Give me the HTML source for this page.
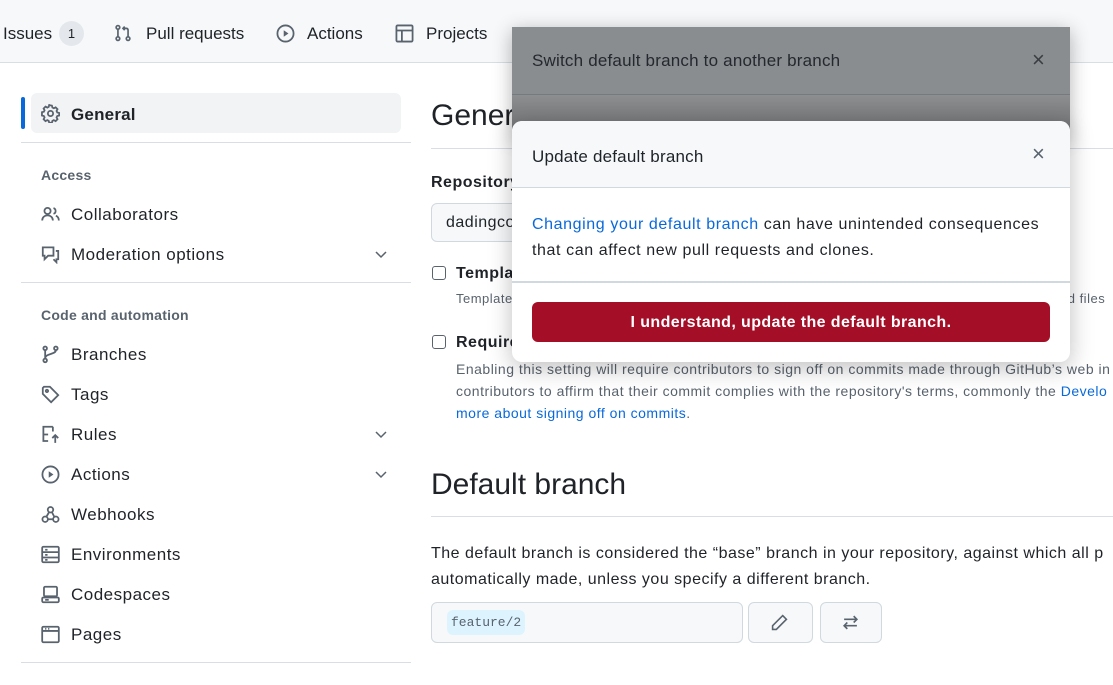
<!DOCTYPE html>
<html><head><meta charset="utf-8"><style>
*{box-sizing:border-box;margin:0;padding:0}
body{width:1113px;height:685px;overflow:hidden;background:#fff;font-family:"Liberation Sans",sans-serif;color:#1f2328;position:relative;letter-spacing:0.5px}
.nav{position:absolute;left:0;top:0;width:1113px;height:63px;background:#f6f8fa;border-bottom:1px solid #d8dee4;letter-spacing:0}
.nav span{position:absolute;top:24px;font-size:17px;color:#1f2328}
.ab{position:absolute}
svg{fill:none;stroke:#59636e;stroke-width:1.5}
.it{position:absolute;left:71px;font-size:17px;margin-top:1px}
.ic{position:absolute;left:41px}
.hr{position:absolute;left:21px;width:390px;height:1px;background:#d8dee4}
.sh{position:absolute;left:41px;font-size:14px;color:#59636e;font-weight:bold;letter-spacing:0.25px;margin-top:1px}
.chev{position:absolute;left:373px}
</style></head><body>
<div class="nav">
<span style="left:3px">Issues</span>
<div class="ab" style="left:59px;top:21px;width:25px;height:25px;border-radius:13px;background:#e4e8ec;font-size:13px;text-align:center;line-height:25px">1</div>
<svg class="ab" style="left:114px;top:24px" width="18" height="18" viewBox="0 0 16 16"><circle cx="3.5" cy="3" r="1.6"/><circle cx="3.5" cy="13" r="1.6"/><circle cx="12.5" cy="13" r="1.6"/><path d="M3.5 4.6v6.8M12.5 11.4V5.5c0-1-.6-1.6-1.6-1.6H8M9.5 2.3 8 3.9l1.5 1.6"/></svg>
<span style="left:146px">Pull requests</span>
<svg class="ab" style="left:276px;top:24px" width="19" height="19" viewBox="0 0 16 16"><circle cx="8" cy="8" r="6.8"/><path d="M6.5 5.3v5.4L10.5 8z" fill="#59636e" stroke="none"/></svg>
<span style="left:307px">Actions</span>
<svg class="ab" style="left:395px;top:24px" width="19" height="19" viewBox="0 0 16 16"><rect x="1.2" y="1.2" width="13.6" height="13.6" rx="1"/><path d="M1.2 5.5h13.6M5.8 5.5v9.3"/></svg>
<span style="left:426px">Projects</span>
</div>

<div class="ab" style="left:21px;top:97px;width:4px;height:32px;border-radius:2px;background:#0969da"></div>
<div class="ab" style="left:31px;top:93px;width:370px;height:40px;border-radius:6px;background:#f2f3f5"></div>
<svg class="ic" style="top:104px" width="19" height="19" viewBox="0 0 16 16"><circle cx="8" cy="8" r="2.2"/><path d="M8 1.2l1.2.2.4 1.6 1.2.6 1.5-.8 1.6 1.6-.8 1.5.6 1.2 1.6.4v2.2l-1.6.4-.6 1.2.8 1.5-1.6 1.6-1.5-.8-1.2.6-.4 1.6H6.9l-.4-1.6-1.2-.6-1.5.8-1.6-1.6.8-1.5-.6-1.2-1.6-.4V6.9l1.6-.4.6-1.2-.8-1.5 1.6-1.6 1.5.8 1.2-.6.4-1.6z"/></svg>
<div class="it" style="top:104px;font-weight:bold;letter-spacing:0.2px">General</div>
<div class="hr" style="top:142px"></div>
<div class="sh" style="top:166px">Access</div>
<svg class="ic" style="top:205px" width="19" height="19" viewBox="0 0 16 16"><circle cx="5.5" cy="5" r="2.6"/><path d="M1 13c0-2.5 2-4.3 4.5-4.3S10 10.5 10 13M10.5 2.6a2.5 2.5 0 010 4.8M12.5 9c1.5.6 2.5 2 2.5 4"/></svg>
<div class="it" style="top:204px">Collaborators</div>
<svg class="ic" style="top:245px" width="19" height="19" viewBox="0 0 16 16"><path d="M1.5 2h9v7H6l-3 3V9H1.5zM12.5 5h2v7h-1.5v2.5L10.5 12"/></svg>
<div class="it" style="top:244px">Moderation options</div>
<svg class="chev" style="top:246px" width="16" height="16" viewBox="0 0 16 16"><path d="M3 6l5 5 5-5"/></svg>
<div class="hr" style="top:282px"></div>
<div class="sh" style="top:306px">Code and automation</div>
<svg class="ic" style="top:345px" width="19" height="19" viewBox="0 0 16 16"><circle cx="3.5" cy="2.8" r="1.5"/><circle cx="3.5" cy="13" r="1.5"/><circle cx="12.5" cy="2.8" r="1.5"/><path d="M3.5 4.3v7.2M12.5 4.3c0 4-9 2.5-9 7"/></svg>
<div class="it" style="top:344px">Branches</div>
<svg class="ic" style="top:385px" width="19" height="19" viewBox="0 0 16 16"><path d="M1.5 2.5v5l7 7 6-6-7-7h-5z"/><circle cx="5" cy="5" r="1"/></svg>
<div class="it" style="top:384px">Tags</div>
<svg class="ic" style="top:425px" width="19" height="19" viewBox="0 0 16 16"><path d="M10 1.5H2v12h4M2 8h4M12 15V8.5M9.5 11l2.5-2.5 2.5 2.5M10 1.5v4"/></svg>
<div class="it" style="top:424px">Rules</div>
<svg class="chev" style="top:426px" width="16" height="16" viewBox="0 0 16 16"><path d="M3 6l5 5 5-5"/></svg>
<svg class="ic" style="top:465px" width="19" height="19" viewBox="0 0 16 16"><circle cx="8" cy="8" r="6.8"/><path d="M6.5 5.3v5.4L10.5 8z" fill="#59636e" stroke="none"/></svg>
<div class="it" style="top:464px">Actions</div>
<svg class="chev" style="top:466px" width="16" height="16" viewBox="0 0 16 16"><path d="M3 6l5 5 5-5"/></svg>
<svg class="ic" style="top:505px" width="19" height="19" viewBox="0 0 16 16"><circle cx="8" cy="4" r="2.3"/><circle cx="3.5" cy="12" r="2.3"/><circle cx="12.5" cy="12" r="2.3"/><path d="M6.8 6 4.5 10M9.2 6l2 4M5.8 12h4.4"/></svg>
<div class="it" style="top:504px">Webhooks</div>
<svg class="ic" style="top:545px" width="19" height="19" viewBox="0 0 16 16"><rect x="1" y="1.5" width="14" height="13" rx="1"/><path d="M1 6h14M1 10.5h14M3.5 4h2M3.5 8.3h2M3.5 12.5h2"/></svg>
<div class="it" style="top:544px">Environments</div>
<svg class="ic" style="top:585px" width="19" height="19" viewBox="0 0 16 16"><rect x="2.5" y="1.5" width="11" height="8" rx="1"/><rect x="1" y="10.5" width="14" height="4" rx="1"/><path d="M3.5 12.5h3"/></svg>
<div class="it" style="top:584px">Codespaces</div>
<svg class="ic" style="top:625px" width="19" height="19" viewBox="0 0 16 16"><rect x="1" y="1.5" width="14" height="13" rx="1"/><path d="M1 5h14M3.5 3.2h1M6 3.2h1"/></svg>
<div class="it" style="top:624px">Pages</div>
<div class="hr" style="top:662px"></div>

<div class="ab" style="left:431px;top:99px;font-size:30px;letter-spacing:0">General</div>
<div class="ab" style="left:431px;top:148px;width:700px;height:1px;background:#d8dee4"></div>
<div class="ab" style="left:431px;top:174px;font-size:16px;font-weight:bold">Repository name</div>
<div class="ab" style="left:431px;top:203px;width:330px;height:39px;border:1px solid #d1d9e0;border-radius:6px;background:#f6f8fa;padding:10px 0 0 14px;font-size:16px">dadingco</div>
<div class="ab" style="left:432px;top:266px;width:14px;height:14px;border:1px solid #59636e;border-radius:3px"></div>
<div class="ab" style="left:456px;top:265px;font-size:16px;font-weight:bold">Template repository</div>
<div class="ab" style="left:456px;top:291px;font-size:13px;color:#59636e;width:660px;white-space:nowrap">Template repositories let users generate new repositories with the same directory structure and files.</div>
<div class="ab" style="left:1060px;top:291px;font-size:13px;color:#59636e;background:#fff">nd files</div>
<div class="ab" style="left:432px;top:335px;width:14px;height:14px;border:1px solid #59636e;border-radius:3px"></div>
<div class="ab" style="left:456px;top:334px;font-size:16px;font-weight:bold">Require contributors to sign off on web-based commits</div>
<div class="ab" style="left:456px;top:358px;font-size:14px;line-height:22px;color:#59636e;white-space:nowrap">Enabling this setting will require contributors to sign off on commits made through GitHub’s web in<br>contributors to affirm that their commit complies with the repository's terms, commonly the <span style="color:#0969da">Develo</span><br><span style="color:#0969da">more about signing off on commits</span>.</div>

<div class="ab" style="left:431px;top:468px;font-size:30px;letter-spacing:0">Default branch</div>
<div class="ab" style="left:431px;top:516px;width:700px;height:1px;background:#d8dee4"></div>
<div class="ab" style="left:431px;top:541px;font-size:16px;line-height:26px;white-space:nowrap">The default branch is considered the “base” branch in your repository, against which all p<br>automatically made, unless you specify a different branch.</div>
<div class="ab" style="left:431px;top:602px;width:312px;height:41px;border:1px solid #d1d9e0;border-radius:6px;background:#f6f8fa"></div>
<div class="ab" style="left:447px;top:610px;height:25px;padding:0 4px;border-radius:6px;background:#ddf4ff;font-family:'Liberation Mono',monospace;font-size:13px;line-height:25px;color:#59636e;letter-spacing:0">feature/2</div>
<div class="ab" style="left:748px;top:602px;width:65px;height:41px;border:1px solid #d1d9e0;border-radius:6px;background:#f6f8fa"></div>
<svg class="ab" style="left:771px;top:614px" width="17" height="17" viewBox="0 0 16 16"><path d="M11 1.5l3.5 3.5L5 14.5H1.5V11z"/></svg>
<div class="ab" style="left:820px;top:602px;width:62px;height:41px;border:1px solid #d1d9e0;border-radius:6px;background:#f6f8fa"></div>
<svg class="ab" style="left:842px;top:614px" width="17" height="17" viewBox="0 0 16 16"><path d="M2 5h12M11 2l3 3-3 3M14 11H2M5 8l-3 3 3 3"/></svg>

<div class="ab" style="left:512px;top:27px;width:558px;height:110px;background:#8a8d90;box-shadow:0 4px 18px rgba(0,0,0,.3)">
 <div class="ab" style="left:20px;top:24px;font-size:17px;color:#24292f;letter-spacing:0.2px">Switch default branch to another branch</div>
 <div class="ab" style="left:520px;top:20px;font-size:22px;color:#3a3d41">×</div>
 <div class="ab" style="left:0;top:67px;width:558px;height:1px;background:#767a7e"></div>
 <div class="ab" style="left:0;top:68px;width:558px;height:42px;background:linear-gradient(#8c8e90,#6c6e70)"></div>
</div>

<div class="ab" style="left:512px;top:121px;width:558px;height:241px;background:#fff;border-radius:10px;box-shadow:0 6px 24px rgba(0,0,0,.25);overflow:hidden">
 <div class="ab" style="left:0;top:0;width:558px;height:67px;background:#f6f8fa;border-bottom:1px solid #d1d9e0"></div>
 <div class="ab" style="left:20px;top:26px;font-size:17px;letter-spacing:0.2px">Update default branch</div>
 <div class="ab" style="left:520px;top:20px;font-size:22px;color:#59636e">×</div>
 <div class="ab" style="left:20px;top:91px;font-size:16px;line-height:26px;white-space:nowrap;letter-spacing:0.6px"><span style="color:#0969da">Changing your default branch</span> can have unintended consequences<br>that can affect new pull requests and clones.</div>
 <div class="ab" style="left:0;top:160px;width:558px;height:2px;background:#d1d9e0"></div>
 <div class="ab" style="left:20px;top:181px;width:518px;height:40px;border-radius:6px;background:#a40e26;color:#fff;font-weight:bold;font-size:16px;text-align:center;line-height:41px;letter-spacing:0.4px">I understand, update the default branch.</div>
</div>
</body></html>
